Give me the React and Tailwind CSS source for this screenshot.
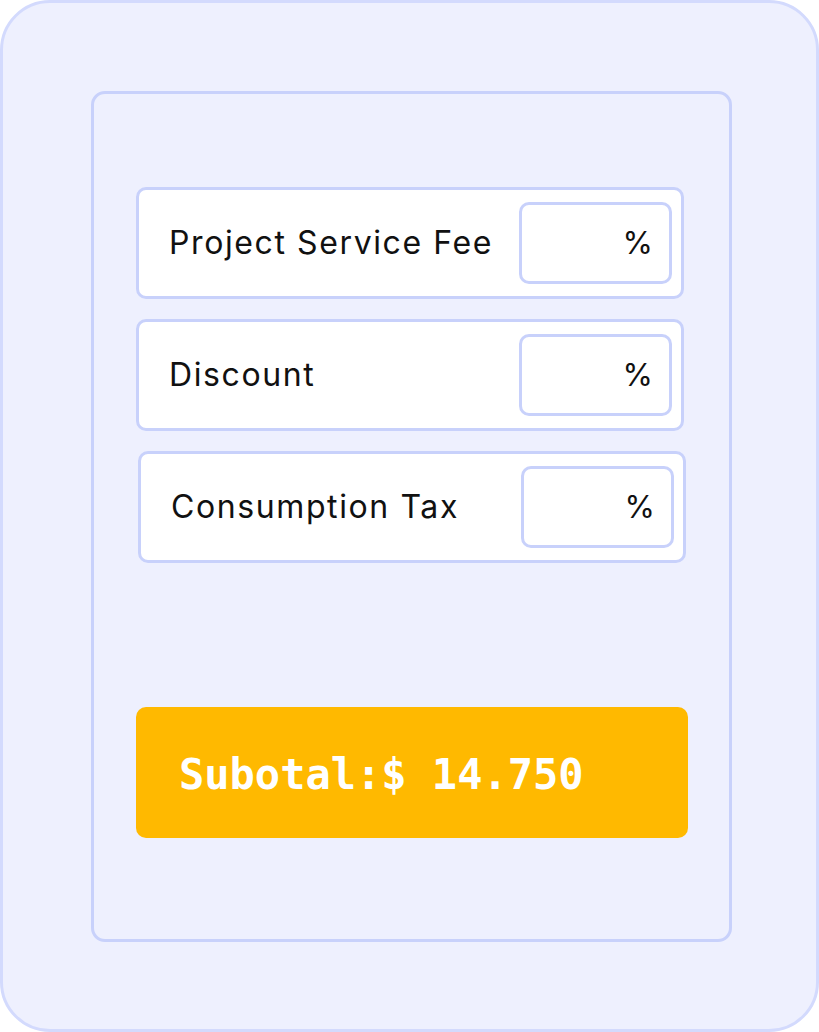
const rows = [
  { label: 'Project Service Fee', shift: '' },
  { label: 'Discount', shift: '' },
  { label: 'Consumption Tax', shift: 'ml-[2px]' },
];

function FeeRow({ label, shift }) {
  return (
    <div
      className={`flex h-[112px] w-[548px] items-center justify-between rounded-[10px] border-[3px] border-[#c8d1fb] bg-white pl-[30px] pr-[9px] ${shift}`}
    >
      <span className="text-[32px] tracking-[1.6px] text-[#111]">{label}</span>
      <div className="flex h-[82px] w-[153px] items-center justify-end rounded-[10px] border-[3px] border-[#c8d1fb] bg-white pr-[16px] text-[31px] text-[#111]">
        %
      </div>
    </div>
  );
}

export default function App() {
  return (
    <div className="h-[1032px] w-[819px] bg-white" style={{ fontFamily: 'Inter, "Noto Sans", sans-serif' }}>
      <div className="h-full w-full rounded-[50px] border-[3px] border-[#d3dafd] bg-[#eef0fe] pl-[88px] pt-[88px]">
        <div className="flex h-[851px] w-[641px] flex-col rounded-[14px] border-[3px] border-[#c8d1fb] pl-[42px] pt-[93px]">
          <div className="flex flex-col gap-[20px]">
            {rows.map((r) => (
              <FeeRow key={r.label} {...r} />
            ))}
          </div>
          <div
            className="mt-[144px] flex h-[131px] w-[552px] items-center rounded-[10px] bg-[#ffb900] pl-[43px] pt-[4px] text-[42px] font-bold text-white"
            style={{ fontFamily: '"DejaVu Sans Mono", "Liberation Mono", monospace' }}
          >
            Subotal:$ 14.750
          </div>
        </div>
      </div>
    </div>
  );
}
